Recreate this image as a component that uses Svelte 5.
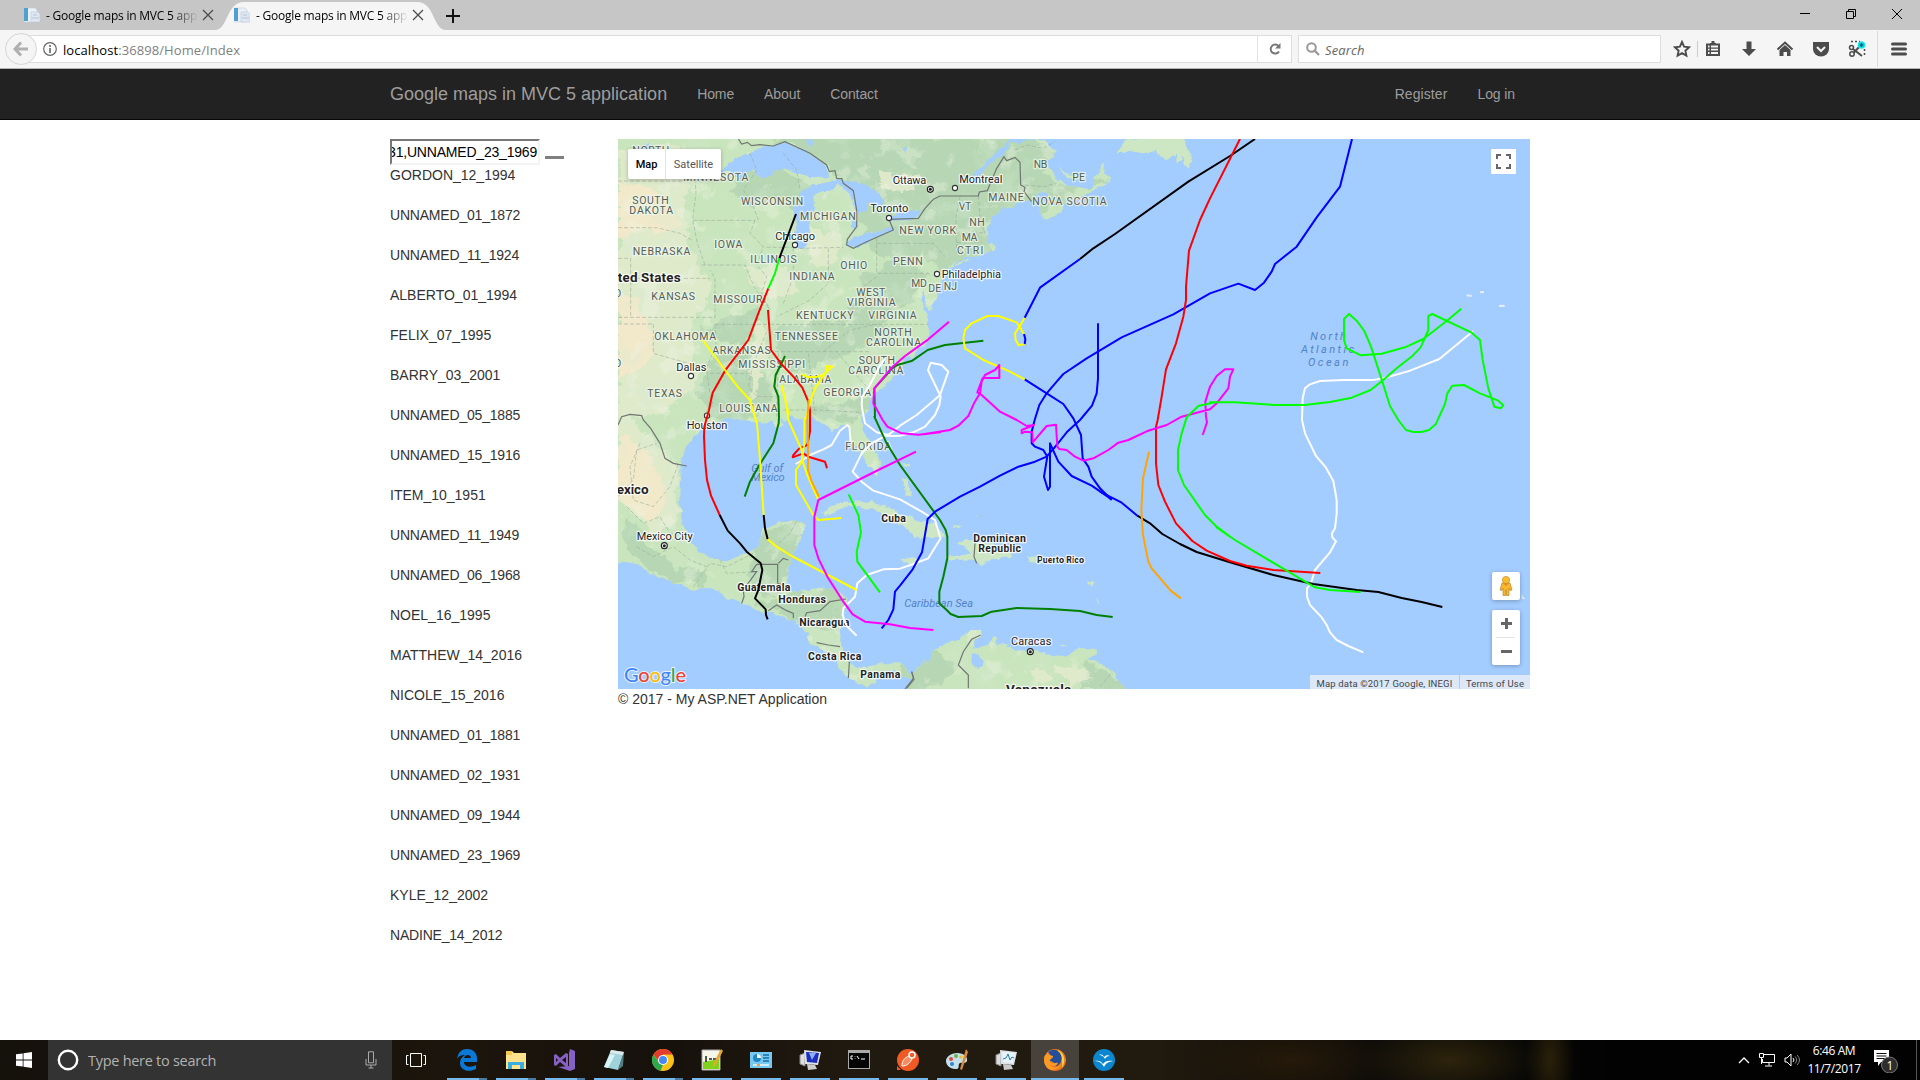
<script>
  // Origins of the map sheets; geometry inside a sheet is in thirds of a pixel.
  const sheets = { A: [610, 130], B: [900, 130], C: [610, 400], D: [900, 400], E: [1210, 130], F: [1210, 400] };
  const at = (s, x, y) => [+(sheets[s][0] + x / 3).toFixed(2), +(sheets[s][1] + y / 3).toFixed(2)];

  // "A 10,20 30,40 B 5,5" -> SVG path data; a letter switches the sheet.
  function path(src, close = false) {
    let s = 'A';
    const pts = [];
    for (const tok of src.trim().split(/\s+/)) {
      if (sheets[tok]) s = tok;
      else pts.push(at(s, ...tok.split(',').map(Number)).join(' '));
    }
    return 'M' + pts.join('L') + (close ? 'Z' : '');
  }

  const mainland = `A 10,15 B 340,15 335,35 355,40 372,30 430,28 470,62 458,82 442,90 448,118 465,140 500,165 520,172 552,178 580,172 585,140 600,118 616,100 612,130 632,145 615,165 580,180 540,200 500,212 488,235 470,255 435,268 418,250 420,222 450,195 430,182 410,200 385,210 350,218 335,235 310,230 290,250 275,260 262,300 268,325 262,340 285,345 286,356 270,360 255,372 215,378 160,398 158,405 210,385 205,395 150,412 134,440 120,470 100,476 112,500 95,530 88,550 75,500 70,480 62,500 80,555 82,580 92,612 75,645 50,655 42,680 18,685 5,710
    A 870,715 845,748 820,772 795,790 778,820 770,850 C 757,40 757,80 778,125 800,160 810,190 808,220 797,232 785,205 765,180 750,150 740,155 735,130 720,125 722,95 712,75 695,75 670,98 650,78 610,55 560,55 545,45 525,65 505,50 522,75 500,88 485,65 440,70 400,58 360,50 330,62 300,72 270,92 230,135 212,190 208,290 215,360 240,420 265,455 300,480 350,480 400,465 430,450 445,440 458,385 500,370 560,360 582,368 578,398 560,440 545,475 530,530 535,575 600,570 650,565 700,580 712,598 700,640 692,690 690,740 715,785 755,803 820,790 870,790 905,820 930,800 940,780 955,788 965,760 990,740 D 120,740 140,730 200,705 212,690 245,690 245,700 225,725 220,750 232,745 262,735 282,710 290,715 285,730 330,738 345,755 400,752 450,765 500,768 535,745 592,745 590,765 560,775 605,790 640,820 680,870 C 880,885 905,840 880,832 850,812 830,812 800,830 795,850 770,860 720,838 690,810 680,780 640,750 600,730 580,690 560,665 530,655 500,645 440,630 400,608 350,595 330,575 290,560 250,572 180,545 120,520 70,490 15,482`;

  const islands = [
    'C 635,340 660,320 700,305 770,303 830,320 880,345 920,360 980,375 D 120,395 130,410 60,415 40,410 30,390 0,375 C 830,345 770,325 720,318 690,325 660,345',
    'D 170,425 200,420 270,430 330,450 340,470 280,478 240,495 225,480 185,478 150,475 215,460 190,435',
    'C 870,478 900,470 935,482 925,492 885,490', 'D 382,472 435,473 450,485 385,488', 'D 145,470 190,474 185,480 150,480',
    'B 650,66 680,27 850,15 865,60 880,85 865,118 845,85 830,105 828,70 800,90 770,62 730,70 700,65',
    'B 478,110 505,135 560,135 555,150 510,148 485,125', 'C 875,235 890,235 897,260 905,290 890,285 885,262', 'C 870,190 895,190 900,200 880,196',
    'D 5,230 18,240 22,262 10,255', 'D 160,378 175,372 188,378 165,382', 'D 218,348 232,350 228,354', 'D 565,545 582,542 575,560', 'D 585,598 600,612 590,610', 'D 480,735 500,735 485,742'
  ];

  const lakes = [
    'A 300,145 345,115 370,90 450,55 522,37 590,65 640,100 655,140 610,145 560,125 520,115 480,135 460,150 430,118 390,150 350,125',
    'A 550,355 558,280 548,235 572,190 610,165 690,150 665,180 630,185 605,205 615,235 598,290 602,330 580,357',
    'A 670,145 740,155 790,175 822,215 800,235 775,220 765,240 748,248 742,300 725,290 735,220 712,185',
    'A 706,345 735,318 800,305 858,288 850,305 790,325 742,352', 'A 828,270 870,245 935,238 925,262 870,270 840,274',
    'B 225,125 300,60 345,15 355,15 310,70 250,120 215,165', 'D 215,765 235,760 252,785 235,810 218,790', 'A 90,45 120,42 130,60 100,65',
    'A 590,25 605,25 615,42 600,45', 'A 880,55 895,50 890,70', 'C 560,680 600,700 590,708 565,695'
  ];

  const dark = [
    'A 440,20 B 340,15 470,60 440,130 500,165 630,140 420,265 300,240 262,300 270,360 160,400 120,440 100,400 60,370 20,400 A 800,380 770,320 730,200 640,110 520,35',
    'A 720,560 760,440 840,400 960,420 930,490 860,540 800,620 700,690 620,700 650,620',
    'A 390,130 470,100 560,140 620,170 580,260 510,210 420,230 360,180', 'A 350,560 450,540 430,620 330,640 270,600', 'A 500,600 700,560 690,640 590,730 500,710',
    'A 600,830 780,800 770,850 700,880 600,855', 'C 445,440 460,385 560,362 578,400 530,520 510,580 440,590 420,520', 'C 500,590 640,565 705,590 690,690 630,690 540,650 440,620',
    'C 60,350 110,430 180,490 290,520 280,555 180,540 60,480 30,400', 'A 260,780 330,650 430,680 490,780 450,860 300,870', 'D 0,770 100,740 160,790 130,870 0,870', 'D 560,790 640,820 680,870 540,870'
  ];
  const pale = [
    'A 24,60 200,50 240,150 220,260 250,380 300,470 240,600 260,760 160,850 24,860', 'C 24,40 90,60 130,120 200,200 200,360 130,410 60,330 24,300',
    'A 400,410 530,410 560,480 500,510 450,490 410,450', 'A 800,130 940,140 900,170 810,180', 'A 600,290 700,310 680,400 590,410', 'D 470,800 540,800 580,840 510,850 480,825', 'A 440,570 480,600 450,740 420,830 425,690', 'D 380,820 420,805 460,845 400,842'
  ];
  const sand = ['A 24,160 100,170 180,230 210,290 150,310 80,300 24,320', 'A 24,480 80,510 130,600 120,700 24,740', 'C 24,110 110,140 150,230 170,300 120,370 60,320 24,300'];

  const borders = [
    'A 385,27 395,42 412,37 425,47 450,44 490,48 525,35 600,70 650,105 658,125 675,122 680,145 695,146 700,160 730,182 740,240 740,290 712,328 710,345 730,355 770,335 850,300 837,268 925,265 945,235 B 100,208 120,198 235,198 238,186 262,182 290,115 312,80 320,92 345,82 360,97 362,165 375,172 372,185 395,215',
    'C 24,75 35,50 60,43 95,47 100,60 122,85 150,130 165,175 190,190 230,198', 'C 395,610 402,590 400,570 440,515 425,515 440,493 503,493 503,550 530,560', 'C 505,490 520,475 535,480',
    'C 475,632 500,615 530,632 550,640 550,655', 'C 585,650 590,638 630,632 660,605 708,597', 'C 620,728 655,735 690,740', 'C 718,785 715,835', 'C 905,815 912,838 890,865',
    'D 242,705 215,718 190,755 175,795 205,825 205,865', 'D 225,430 222,470 230,490', 'D 35,815 40,835 15,867'
  ];
  const states = [
    'A 24,153 250,153', 'A 24,293 140,293 210,310 245,330', 'A 250,75 258,190 248,270 262,340 285,405', 'A 250,271 435,271', 'A 275,405 405,405 432,470 480,540', 'A 24,385 62,385 62,562', 'A 24,445 300,445', 'A 24,562 315,562 315,445 300,420', 'A 130,582 130,670 200,690 290,715',
    'A 315,583 480,583', 'A 480,583 730,583 B 85,583', 'A 315,583 318,640 290,715 298,780 310,830', 'A 300,730 420,730', 'A 470,605 430,700 415,770 440,800 505,800', 'A 495,665 780,665', 'A 505,670 500,860', 'A 595,670 615,850', 'A 520,840 620,840 770,848',
    'A 435,271 420,310 460,350 440,405 470,440 455,490 480,540', 'A 470,352 550,352', 'A 550,352 550,440 520,520', 'A 570,355 700,352', 'A 655,355 655,460 600,510 500,560', 'A 800,325 800,430 B -70,430 90,430', 'A 800,440 760,470 740,540 700,583', 'A 640,665 720,600 800,583', 'A 680,665 760,760 790,790', 'A 800,340 B 100,340 135,380',
    'A 420,70 440,120 400,180 430,230 445,270', 'A 520,70 560,120 570,180', 'B 180,200 168,260 170,370', 'B 235,198 240,260 255,310', 'B 165,310 255,308', 'B 170,337 245,337', 'B 345,60 380,45 430,55 465,35', 'A 24,582 130,582', 'B 375,165 430,170 470,160',
    'C 24,290 70,240 80,150 140,130', 'C 90,130 60,200 70,300 130,320 180,260 205,190', 'C 50,320 100,370 150,350 180,400 230,410', 'C 80,440 130,470 190,440 240,480 290,500', 'C 250,560 300,490 350,500 430,460', 'C 505,430 540,400 560,362', 'C 330,480 350,520 440,515', 'D 600,860 630,825'
  ];

  const tracks = [
    ['#fffaf0', 'C 557,192 578,180 600,165 640,148 665,135 690,92 712,75 718,80 722,125'],
    ['#ffffff', 'A 825,685 805,715 780,765 757,800 755,820 C 757,30 765,70 800,97 835,105 870,77 920,45 973,0 B 120,795 145,725 125,705 92,698 84,720 120,795 D 122,-10 118,15 105,45 75,80 40,97 0,107 C 825,108 785,130 755,160 728,215 755,245 790,272 870,298 935,335 975,360 990,410 D 122,415 85,475 40,492 0,506 C 820,508 770,525 742,550 735,590 700,625 698,645 710,678 740,707'],
    ['#ffffff', 'E 790,603 688,687 600,722 520,745 490,750 400,750 330,753 300,763 285,775 278,805 276,870 F 276,60 285,100 318,168 348,203 370,243 380,300 380,340 375,385 366,400 367,412 378,424 360,457 315,510 303,550 291,565 291,590 300,615 335,652 350,675 360,697 380,720 415,738 460,757'],
    ['#008000', 'A 525,678 515,700 497,735 493,770 505,800 507,860 C 506,70 490,130 445,200 420,245 404,290'],
    ['#ff0000', 'A 475,475 445,550 415,630 345,722 308,788 302,815 297,840 C 283,80 282,110 285,180 291,240 303,287 329,345'],
    ['#000000', 'A 558,252 508,385'], ['#00ff00', 'A 508,385 495,430 475,475'],
    ['#000000', 'C 329,345 353,392 390,430 410,455 452,490 457,510 445,570 435,595 467,628 468,645 473,658'],
    ['#ff0000', 'A 474,540 483,660 515,703 550,740 577,773 595,815 600,840 C 600,95 592,135 568,145 550,165 548,172 580,160 595,170 645,185 651,205'],
    ['#ffff00', 'A 278,630 345,720 385,772 420,810 430,845 C 441,70 450,180 461,345'],
    ['#000000', 'C 461,345 465,385 473,418'], ['#ffff00', 'C 473,418 500,440 545,468 740,570'],
    ['#ffff00', 'A 515,765 535,850 C 530,20 535,60 555,105 575,150 578,185 592,225 627,305'],
    ['#ffff00', 'A 575,733 590,740 615,742 640,735 655,720 667,710 650,708 648,725 615,775 600,815 590,860 C 583,60 583,130 575,185 558,210 558,255 610,345 625,360 694,354'],
    ['#ffa500', 'A 596,810 592,870 C 594,130 594,210 605,245 627,290'],
    ['#008000', 'B 250,632 135,645 83,660 37,692 0,703 A 860,706 846,715 825,740 793,775 795,860 C 793,50 830,130 870,195 990,360 D 137,390 142,410 142,475 130,530 118,575 118,610 140,630 152,642 175,651 245,648 275,635 350,624 450,627 540,633 590,645 638,651'],
    ['#0000ff', 'E 426,27 390,170 320,262 260,350 195,402 185,425 162,458 135,480 85,461 0,490 B 820,553 665,622 560,685 490,732 470,755 440,790 418,825 404,870 D 395,95 395,130 405,140 430,150 442,170 432,230 444,270 450,260 450,130 475,185 515,228 575,257 635,298'],
    ['#0000ff', 'B 594,580 594,745 590,790 576,827 540,870 D 500,97 470,135 440,170 405,185 355,200 300,227 240,260 180,290 105,335 83,357 66,457 38,508 0,557 C 855,575 850,628 835,660 815,685'],
    ['#0000ff', 'B 374,748 440,790 490,822 520,865 D 543,105 548,175 565,200 575,230 600,265 635,300'],
    ['#0000ff', 'D 600,275 665,308 712,347'], ['#000000', 'D 712,347 750,370 787,402 840,432 890,456 990,487 F 60,487 190,525 310,552 440,570 505,576 575,594 635,606 697,621'],
    ['#ffff00', 'B 374,563 358,590 345,610 347,630 356,646 374,642'], ['#ffff00', 'B 374,615 350,577 295,558 262,558 215,580 195,600 190,625 195,655 250,690 330,725 374,748'],
    ['#0000ff', 'B 372,612 376,628 374,642'], ['#0000ff', 'B 374,563 420,473 540,387'], ['#000000', 'B 540,387 580,355 645,312 865,155 990,78 E 135,27'],
    ['#ff0000', 'E 90,27 0,205 B 900,270 867,362 858,470 858,510 850,560 828,640 798,718 785,800 773,870 D 768,80 768,190 775,255 795,305 828,370 877,423 920,452 990,483 F 110,497 190,510 331,519'],
    ['#ffa500', 'D 747,155 729,235 724,330 729,405 745,485 755,505 812,572 843,595'],
    ['#ff00ff', 'B 147,575 85,628 15,678 A 848,710 793,775 790,820 818,870 C 832,80 875,100 925,104 990,97 D 70,103 150,90 175,77 205,48 222,10 B 240,790 245,755 255,735 285,720 298,705 298,744 248,744 232,787 245,795 300,845 350,870 D 380,78 402,75 365,90 365,100 375,95 397,97 398,127 440,78 468,74 472,140 478,147 500,150 525,170 550,182 580,175 625,150 655,128 685,120 745,92 800,75 845,50 930,28 950,10 B 985,775 990,740 E 70,718 45,718 20,738 0,770 B 916,815 918,860 D 921,67 908,105'],
    ['#ff00ff', 'C 918,155 805,210 625,300 613,350 613,435 625,475 652,530 700,605 728,643 765,665 840,673 900,684 970,690'],
    ['#00ff00', 'C 716,283 745,345 753,397 740,455 742,485 810,577'],
    ['#00ff00', 'E 754,536 710,573 640,627 585,652 515,671 453,676 410,655 402,630 402,567 417,552 440,572 463,603 483,650 517,755 540,828 565,870 F 588,90 610,96 635,96 657,90 677,73 705,12 E 712,790 727,767 762,765 810,790 865,812 880,826 872,835 853,830 835,775 818,690 810,630 785,608 667,552 655,558 655,600 632,652 608,677 560,715 517,752 482,780 425,803 360,816 285,825 195,825 75,817 0,817 B 945,817 895,828 860,862 D 845,100 834,150 834,210 852,255 915,345 950,380 990,410 F 20,382 75,420 235,515 315,562 360,570 452,576']
  ];

  // sheet, left, right, baseline, text, style
  const labels = [
    ['A', 67, 178, 70, 'NORTH', 'st'], ['A', 67, 176, 221, 'SOUTH', 'st'], ['A', 58, 189, 250, 'DAKOTA', 'st'], ['A', 220, 415, 151, 'MINNESOTA', 'st'], ['A', 393, 580, 223, 'WISCONSIN', 'st'],
    ['A', 570, 737, 269, 'MICHIGAN', 'st'], ['A', 313, 397, 353, 'IOWA', 'st'], ['A', 68, 241, 374, 'NEBRASKA', 'st'], ['A', 421, 560, 397, 'ILLINOIS', 'st'], ['A', 691, 772, 415, 'OHIO', 'st'],
    ['A', 538, 674, 448, 'INDIANA', 'st'], ['A', 849, 938, 403, 'PENN', 'st'], ['A', 904, 951, 470, 'MD', 'st'], ['A', 124, 255, 508, 'KANSAS', 'st'], ['A', 310, 468, 517, 'MISSOURI', 'st'],
    ['A', 739, 826, 496, 'WEST', 'st'], ['A', 711, 857, 526, 'VIRGINIA', 'st'], ['A', 558, 731, 566, 'KENTUCKY', 'st'], ['A', 775, 920, 566, 'VIRGINIA', 'st'], ['A', 133, 318, 628, 'OKLAHOMA', 'st'],
    ['A', 494, 684, 628, 'TENNESSEE', 'st'], ['A', 793, 905, 616, 'NORTH', 'st'], ['A', 768, 933, 646, 'CAROLINA', 'st'], ['A', 307, 482, 670, 'ARKANSAS', 'st'], ['A', 385, 585, 712, 'MISSISSIPPI', 'st'],
    ['A', 746, 855, 701, 'SOUTH', 'st'], ['A', 715, 880, 731, 'CAROLINA', 'st'], ['A', 508, 664, 757, 'ALABAMA', 'st'], ['A', 640, 783, 797, 'GEORGIA', 'st'], ['A', 112, 216, 799, 'TEXAS', 'st'],
    ['A', 328, 503, 844, 'LOUISIANA', 'st'], ['A', -15, 34, 500, 'CO', 'st'], ['A', -15, 34, 710, 'CO', 'st'], ['B', -2, 168, 310, 'NEW YORK', 'st'], ['B', 401, 442, 114, 'NB', 'st'], ['B', 517, 555, 152, 'PE', 'st'],
    ['B', 176, 214, 239, 'VT', 'st'], ['B', 265, 371, 211, 'MAINE', 'st'], ['B', 397, 620, 223, 'NOVA SCOTIA', 'st'], ['B', 208, 254, 286, 'NH', 'st'], ['B', 185, 232, 332, 'MA', 'st'],
    ['B', 171, 250, 370, 'CTRI', 'st'], ['B', 85, 124, 486, 'DE', 'st'], ['B', 131, 171, 478, 'NJ', 'st'], ['C', 706, 843, 150, 'FLORIDA', 'st'],
    ['A', 848, 949, 160, 'Ottawa', 'city'], ['A', 781, 895, 244, 'Toronto', 'city'], ['A', 496, 615, 328, 'Chicago', 'city'], ['A', 199, 289, 722, 'Dallas', 'city'], ['C', 230, 352, 87, 'Houston', 'city'],
    ['B', 178, 307, 158, 'Montreal', 'city'], ['B', 125, 303, 442, 'Philadelphia', 'city'], ['C', 80, 248, 418, 'Mexico City', 'city'], ['D', 333, 454, 733, 'Caracas', 'city'],
    ['A', -38, 212, 456, 'United States', 'big'], ['C', -15, 116, 281, 'Mexico', 'big'], ['D', 318, 514, 881, 'Venezuela', 'big'],
    ['C', 814, 888, 366, 'Cuba', 'land'], ['C', 382, 541, 573, 'Guatemala', 'land'], ['C', 505, 648, 609, 'Honduras', 'land'], ['C', 568, 718, 678, 'Nicaragua', 'land'], ['C', 594, 754, 780, 'Costa Rica', 'land'],
    ['C', 751, 871, 832, 'Panama', 'land'], ['D', 220, 378, 426, 'Dominican', 'land'], ['D', 235, 363, 456, 'Republic', 'land'], ['D', 411, 552, 489, 'Puerto Rico', 'small'],
    ['C', 424, 520, 214, 'Gulf of', 'sea'], ['C', 424, 524, 243, 'Mexico', 'sea'], ['D', 13, 219, 620, 'Caribbean Sea', 'sea'], ['E', 301, 408, 629, 'North', 'ocean'], ['E', 273, 432, 668, 'Atlantic', 'ocean'], ['E', 294, 415, 707, 'Ocean', 'ocean']
  ].map(([s, x0, x1, y, text, kind]) => ({ p: at(s, x0, y + 1), w: (x1 - x0) / 3, text, kind }));

  const towns = [['A', 837, 264], ['A', 555, 345], ['A', 243, 738], ['C', 291, 47], ['B', 165, 174], ['B', 111, 432]].map((t) => at(...t));
  const capitals = [['A', 961, 178], ['C', 163, 437], ['D', 391, 755]].map((t) => at(...t));

  const storms = ['GORDON_12_1994', 'UNNAMED_01_1872', 'UNNAMED_11_1924', 'ALBERTO_01_1994', 'FELIX_07_1995', 'BARRY_03_2001', 'UNNAMED_05_1885', 'UNNAMED_15_1916', 'ITEM_10_1951', 'UNNAMED_11_1949', 'UNNAMED_06_1968', 'NOEL_16_1995', 'MATTHEW_14_2016', 'NICOLE_15_2016', 'UNNAMED_01_1881', 'UNNAMED_02_1931', 'UNNAMED_09_1944', 'UNNAMED_23_1969', 'KYLE_12_2002', 'NADINE_14_2012'];
  const apps = ['edge', 'files', 'vs', 'notepad', 'chrome', 'npp', 'panel', 'remote', 'cmd', 'postman', 'paint', 'perf', 'firefox', 'bird'];
  const stacked = ['edge', 'files', 'vs', 'notepad', 'chrome'];
</script>

{#snippet favicon()}
  <svg class="fav" width="16" height="16" viewBox="0 0 16 16"><path d="M0 1h11l2 2v12H0z" fill="#e9f0f6" stroke="#c3d0dc" stroke-width=".6" /><path d="M0 1h4v13H0z" fill="#4f9fd0" /><path d="M7 5h7l2 2v8H7z" fill="#dfe7f1" stroke="#bccbdd" stroke-width=".6" /><path d="M9 8h4M8 11h7" stroke="#b4c5dd" /></svg>
{/snippet}
{#snippet cross()}
  <svg class="cross" width="12" height="12" viewBox="0 0 12 12"><path d="M1 1l10 10M11 1L1 11" stroke="#4c4c4c" stroke-width="1.3" /></svg>
{/snippet}

<div class="screen">
  <header class="tabs">
    <div class="tab first">{@render favicon()}<span>- Google maps in MVC 5 app</span>{@render cross()}</div>
    <div class="tab active">
      <svg class="shape" width="240" height="30" viewBox="0 0 240 30"><path d="M0 30C13 30 11 3 28 2H203C220 3 218 30 231 30z" fill="#f5f5f5" /></svg>
      {@render favicon()}<span>- Google maps in MVC 5 app</span>{@render cross()}
    </div>
    <svg class="plus" width="14" height="14" viewBox="0 0 14 14"><path d="M7 0v14M0 7h14" stroke="#111" stroke-width="2" /></svg>
    <div class="window">
      <svg width="10" height="10"><path d="M0 4.5h10" stroke="#000" /></svg>
      <svg width="10" height="10"><path d="M.5 2.5h7v7h-7zM2.500 2.500v-2h7v7h-2" fill="none" stroke="#000" /></svg>
      <svg width="10" height="10"><path d="M0 0l10 10M10 0L0 10" stroke="#000" /></svg>
    </div>
  </header>

  <div class="toolbar">
    <div class="back"><svg width="16" height="16" viewBox="0 0 16 16"><path d="M8 1.500L2 8l6 6.500M2.500 8H15" fill="none" stroke="#b0b0b0" stroke-width="3" /></svg></div>
    <div class="url">
      <svg width="14" height="14" viewBox="0 0 14 14"><circle cx="7" cy="7" r="6.300" fill="none" stroke="#666" stroke-width="1.200" /><path d="M7 6v5M7 3v2" stroke="#666" stroke-width="1.600" /></svg>
      <p>localhost<span>:36898/Home/Index</span></p>
      <div class="reload"><svg width="12" height="12" viewBox="0 0 12 12"><path d="M9.500 3A4.500 4.500 0 1 0 10 8.500" fill="none" stroke="#777" stroke-width="2" /><path d="M11.500 0v5.500H6z" fill="#777" /></svg></div>
    </div>
    <div class="find">
      <svg width="14" height="14" viewBox="0 0 14 14"><circle cx="5.500" cy="5.500" r="4.300" fill="none" stroke="#999" stroke-width="2" /><path d="M8.500 8.500L13 13" stroke="#999" stroke-width="2.300" /></svg>
      <em>Search</em>
    </div>
    <div class="tools">
      <svg width="18" height="18" viewBox="0 0 18 18"><path d="M9 2l2.100 4.700 5 .6-3.700 3.400 1 5L9 13.200l-4.400 2.500 1-5L1.900 7.300l5-.6z" fill="none" stroke="#4c4c4c" stroke-width="1.900" /></svg>
      <i></i>
      <svg width="18" height="18" viewBox="0 0 18 18"><path d="M6 3h1.500V1h3v2H12v2H6zM2 3.500h14V16H2z" fill="#4c4c4c" /><path d="M4 6.500h1.500M7 6.500h7M4 9.700h1.500M7 9.700h7M4 13h1.500M7 13h7" stroke="#f5f5f5" stroke-width="1.800" /></svg>
      <svg width="18" height="18" viewBox="0 0 18 18"><path d="M6.500 1.500h5V9H16l-7 7L2 9h4.500z" fill="#4c4c4c" /></svg>
      <svg width="18" height="18" viewBox="0 0 18 18"><path d="M1.500 9.500L9 2.500l7.500 7" fill="none" stroke="#4c4c4c" stroke-width="2" /><path d="M3.500 10L9 5l5.500 5v6H11v-4H7.500v4h-4z" fill="#4c4c4c" /></svg>
      <svg width="18" height="18" viewBox="0 0 18 18"><path d="M1 2h16v7a8 7.500 0 0 1-16 0z" fill="#4c4c4c" /><path d="M5 7l4 4 4-4" fill="none" stroke="#f5f5f5" stroke-width="2" /></svg>
      <svg width="18" height="18" viewBox="0 0 18 18"><path d="M3 1.500h9M16.500 9v7" stroke="#4c4c4c" stroke-width="1.500" stroke-dasharray="2 2" /><circle cx="3.500" cy="7.500" r="2" fill="none" stroke="#4c4c4c" stroke-width="1.500" /><circle cx="4" cy="14" r="2.200" fill="none" stroke="#4c4c4c" stroke-width="1.500" /><path d="M5 9l9 7M5.500 13L12 6" stroke="#4c4c4c" stroke-width="1.900" /><circle cx="13.500" cy="5" r="3.800" fill="#12e8f5" /><path d="M13.500 2.800v4.400M11.500 5h4M12 3.500l3 3M15 3.500l-3 3" stroke="#075a66" /></svg>
      <b></b>
      <svg class="menu" width="18" height="18" viewBox="0 0 18 18"><path d="M2.500 4h13M2.500 9h13M2.500 14h13" stroke="#4c4c4c" stroke-width="3" stroke-linecap="round" /></svg>
    </div>
  </div>

  <nav>
    <div class="container">
      <a class="brand">Google maps in MVC 5 application</a><a>Home</a><a>About</a><a>Contact</a><a class="right">Register</a><a>Log in</a>
    </div>
  </nav>

  <main class="container">
    <aside>
      <div class="pick"><div class="field"><span>31,UNNAMED_23_1969</span></div><hr /></div>
      {#each storms as storm}<p class:tight={storm.startsWith('UNNAMED') || storm.startsWith('NADINE')}>{storm}</p>{/each}
    </aside>
    <section>
      <div class="map">
        <svg class="chart" width="912" height="550" viewBox="618 139 912 550">
          <defs>
            <clipPath id="coast"><path d={path(mainland, true)} /></clipPath>
            <filter id="relief" x="0" y="0" width="100%" height="100%"><feTurbulence type="fractalNoise" baseFrequency=".035" numOctaves="4" seed="8" /><feColorMatrix values="0 0 0 0 .67  0 0 0 0 .82  0 0 0 0 .66  3 0 0 0 -1.500" /><feComponentTransfer><feFuncA type="discrete" tableValues="0 .1 .22 .3" /></feComponentTransfer></filter>
            <filter id="plains" x="0" y="0" width="100%" height="100%"><feTurbulence type="fractalNoise" baseFrequency=".05" numOctaves="3" seed="21" /><feColorMatrix values="0 0 0 0 .91  0 0 0 0 .93  0 0 0 0 .8  0 5 0 0 -2.800" /><feComponentTransfer><feFuncA type="discrete" tableValues="0 .35 .6" /></feComponentTransfer></filter>
            <filter id="rough" x="-5%" y="-5%" width="110%" height="110%"><feTurbulence type="fractalNoise" baseFrequency=".06" numOctaves="3" seed="3" /><feDisplacementMap in="SourceGraphic" scale="16" xChannelSelector="R" yChannelSelector="G" /></filter>
            <filter id="shore" x="-5%" y="-5%" width="110%" height="110%"><feTurbulence type="fractalNoise" baseFrequency=".13" numOctaves="3" seed="5" /><feDisplacementMap in="SourceGraphic" scale="6" xChannelSelector="R" yChannelSelector="G" /></filter>
          </defs>
          <rect x="618" y="139" width="912" height="550" fill="#a3ccff" />
          <g filter="url(#shore)">
            <path d={path(mainland, true)} fill="#c9e5bd" />
            {#each islands as d}<path d={path(d, true)} fill="#cde6c3" />{/each}
            <g clip-path="url(#coast)">
              <g filter="url(#rough)">
                {#each dark as d}<path d={path(d, true)} fill="#b7d7b4" />{/each}
                {#each pale as d}<path d={path(d, true)} fill="#e0eacb" opacity=".95" />{/each}
                {#each sand as d}<path d={path(d, true)} fill="#f2e9ca" opacity=".95" />{/each}
              </g>
              <rect x="618" y="139" width="620" height="550" filter="url(#relief)" />
              <rect x="618" y="139" width="620" height="550" filter="url(#plains)" opacity=".55" />
            </g>
            {#each lakes as d}<path d={path(d, true)} fill="#a3ccff" />{/each}
          </g>
          <path d={path('E 770,496 785,498')} stroke="#e5eff5" stroke-width="2" /><path d={path('E 810,487 822,486')} stroke="#e5eff5" stroke-width="2" /><path d={path('E 867,528 884,527')} stroke="#e5eff5" stroke-width="2" /><path d={path('F 934,583 945,597 937,597', true)} fill="#e5eff5" />
          {#each states as d}<path class="state" d={path(d)} />{/each}
          {#each borders as d}<path class="border" d={path(d)} />{/each}
          {#each towns as [x, y]}<circle cx={x} cy={y} r="2.600" fill="#fff" stroke="#333" stroke-width="1.100" />{/each}
          {#each capitals as [x, y]}<circle cx={x} cy={y} r="3" fill="#fff" stroke="#222" stroke-width="1.100" /><circle cx={x} cy={y} r="1.500" fill="#222" />{/each}
          {#each labels as l}<text class={l.kind} x={l.p[0]} y={l.p[1]} textLength={l.w}>{l.text}</text>{/each}
          {#each tracks as [color, d]}<path class="track" d={path(d)} stroke={color} />{/each}
          <text class="logo" x="624" y="681.500" textLength="62"><tspan fill="#4285f4">G</tspan><tspan fill="#ea4335">o</tspan><tspan fill="#fbbc05">o</tspan><tspan fill="#4285f4">g</tspan><tspan fill="#34a853">l</tspan><tspan fill="#ea4335">e</tspan></text>
        </svg>
        <div class="kinds"><b>Map</b><span>Satellite</span></div>
        <div class="full"><svg width="15" height="15" viewBox="0 0 15 15"><path d="M1 5V1h4M10 1h4v4M14 10v4h-4M5 14H1v-4" fill="none" stroke="#666" stroke-width="2" /></svg></div>
        <div class="controls">
          <div class="peg"><svg width="14" height="20" viewBox="0 0 14 20"><path d="M3 7h8l2 7-2 .5L10 12v7.500H7.500V14h-1v5.500H4V12l-1 2.500L1 14z" fill="#f9b82c" stroke="#b8862a" stroke-width=".7" /><circle cx="7" cy="4" r="3.600" fill="#fbbd30" stroke="#c18d29" stroke-width=".7" /><path d="M4.500 7.500h5L7 10z" fill="#dd852a" /></svg></div>
          <div class="zoom"><svg width="28" height="55" viewBox="0 0 28 55"><path d="M14.500 8v11M9 13.500h11M9 41.500h11" stroke="#666" stroke-width="3" /><path d="M4 27.500h19" stroke="#e3e3e3" /></svg></div>
        </div>
        <div class="legal"><span>Map data ©2017 Google, INEGI</span><span>Terms of Use</span></div>
      </div>
      <footer>© 2017 - My ASP.NET Application</footer>
    </section>
  </main>

  <div class="taskbar">
    <div class="start"><svg width="16" height="16" viewBox="0 0 16 16"><path d="M0 2.300L6.700 1.400v6.200H0zM7.500 1.300L16 0v7.600H7.500zM0 8.400h6.700v6.200L0 13.700zM7.500 8.400H16V16l-8.500-1.200z" fill="#fff" /></svg></div>
    <div class="cortana">
      <svg width="22" height="22" viewBox="0 0 22 22"><circle cx="11" cy="11" r="9.200" fill="none" stroke="#fff" stroke-width="2.400" /></svg>
      <span>Type here to search</span>
      <svg width="12" height="18" viewBox="0 0 12 18"><path d="M3.500.8h5v11h-5zM1 8v6h10V8M6 14v3M3.500 17h5" fill="none" stroke="#aaa" /></svg>
    </div>
    <div class="view"><svg width="20" height="14" viewBox="0 0 20 14"><path d="M4.500.5h11v13h-11zM2.500 2.500h-2v9h2M17.500 2.500h2v9h-2" fill="none" stroke="#fff" /></svg></div>
    <div class="apps">
      {#each apps as app}
        <div class="app" class:on={app === 'firefox'} class:many={stacked.includes(app)}>
          <svg width="22" height="22" viewBox="0 0 22 22">
            {#if app === 'edge'}
              <path d="M1 10C2 3 6 0 11 0c7 0 10 5 10 9v4H8c0 5 7 6 12 3v4c-8 4-16 1-16-6 0-4 2-6 5-8-5 0-7 2-8 4zm7-1h7c0-4-6-4-7 0z" fill="#0a78d7" />
            {:else if app === 'files'}
              <path d="M1 2h6l2 2h12v16H1z" fill="#ffe28c" /><path d="M1 2h6v4H1z" fill="#f4c950" /><path d="M3 20v-7h16v7h-4v-4H7v4z" fill="#3aaee0" />
            {:else if app === 'vs'}
              <path d="M16 0l5 2v18l-5 2-12-4 11-1V4zM0 6l2-1 4 4 6-5 2 1v12l-2 1-6-5-4 4-2-1zm2 3v4l2-2zm6 2l4 3V8z" fill="#8661c5" />
            {:else if app === 'notepad'}
              <path d="M8 1l13 2-6 18L1 18z" fill="#9fd3dc" /><path d="M8 1l13 2-1 3L7 4z" fill="#dce9ec" /><path d="M7 5l5 1-7 13-4-1z" fill="#d9f2f5" /><path d="M21 3l-6 18 5-4z" fill="#557d86" />
            {:else if app === 'chrome'}
              <circle cx="11" cy="11" r="11" fill="#fbc116" /><path d="M1.500 5.500A11 11 0 0 1 20.500 5.500H11L7 13z" fill="#e33b2e" /><path d="M1.500 5.500L7 14l4 2-2.500 5.800A11 11 0 0 1 1.500 5.500z" fill="#2da94f" /><circle cx="11" cy="11" r="5" fill="#fff" /><circle cx="11" cy="11" r="4" fill="#4688f4" />
            {:else if app === 'npp'}
              <path d="M1 1h18v20H1z" fill="#f5f5e8" stroke="#aaa" /><path d="M2 13l16-3v10H2z" fill="#80d21b" /><path d="M5 7v6M8 10h3M12 10h3" stroke="#222" stroke-width="1.500" /><path d="M20 0l2 2-8 15-2 1v-3z" fill="#e2a932" />
            {:else if app === 'panel'}
              <rect y="3" width="22" height="16" fill="#78c9ef" /><circle cx="7" cy="9" r="4" fill="#1f86c8" /><path d="M7 9V5a4 4 0 0 1 4 4z" fill="#fff" /><path d="M13 6h6M13 9h6M13 12h6" stroke="#176ca6" stroke-width="1.500" /><path d="M3 16h16" stroke="#e9f8ff" stroke-width="1.500" /><path d="M7 16h3" stroke="#f4a22c" stroke-width="2" />
            {:else if app === 'remote' || app === 'perf'}
              <path d="M1 6l5-2v13l-5-2z" fill="#ddd" stroke="#888" /><path d="M5 1l17 2-3 13-13-1z" fill="#dde3e8" /><path d="M7 3l13 1-2 10-10-1z" fill={app === 'remote' ? '#1d2ebd' : '#e9f4fa'} /><path d="M8 15l8 1 2 4-9 1z" fill="#ccc" />
              {#if app === 'remote'}<path d="M10 4l3 7 4-7" fill="#8db0ff" />{:else}<path d="M8 10l3-1 2-4 2 6 2-3 2 1" fill="none" stroke="#247fb5" />{/if}
            {:else if app === 'cmd'}
              <rect y="1" width="22" height="19" fill="#aaa" /><rect x="1" y="4" width="20" height="15" fill="#050505" /><path d="M5 7H3v3h2M7 7v.5M7 9.500v.5M9 7l2 3M13 10h4" fill="none" stroke="#fff" />
            {:else if app === 'postman'}
              <circle cx="11" cy="11" r="11" fill="#f15a24" /><path d="M5 17c0-5 2-8 7-10l3 3c-2 4-5 7-10 7z" fill="#f78b62" stroke="#fff" /><path d="M0 17l4 4H0z" fill="#f15a24" /><circle cx="15" cy="6" r="3" fill="#f15a24" stroke="#fff" stroke-width="1.500" />
            {:else if app === 'paint'}
              <path d="M11 4c7 0 11 4 10 8-2 4-6 0-8 3-1 3 1 5-4 5-5 0-9-4-9-8s5-8 11-8z" fill="#c4e0ee" /><circle cx="5" cy="10" r="2" fill="#de4b32" /><circle cx="10" cy="7" r="2" fill="#67b445" /><circle cx="6" cy="15" r="2" fill="#3482cc" /><circle cx="15" cy="8" r="1.800" fill="#efc02f" /><path d="M20 0l2 3-6 18-2-1z" fill="#d98b3c" />
            {:else if app === 'firefox'}
              <circle cx="11" cy="11" r="11" fill="#ed7320" /><path d="M14 1c7 3 8 12 4 18 1-7-1-9-4-13z" fill="#ffd13d" /><path d="M4 3c5-4 11-2 13 3 2 4 0 9-4 11-4-1-1-5-8-5 0-2 3-2 3-4z" fill="#244e9a" /><path d="M0 9c1-4 3-3 4-6l1 3 4 1c1 2-4 3-3 5 2 4 6 1 8 2-1 3-5 4-8 2 3 4 9 3 12-2-2 8-18 12-18-5z" fill="#f99a24" />
            {:else}
              <circle cx="11" cy="11" r="11" fill="#0c86ce" /><path d="M6 6c3-1 4 0 5 2 2-2 4-2 6-1-3 0-4 1-5 3-2-3-3-4-6-4zM1 12c5-1 7 0 9 3 2-3 5-4 10-3-5 1-7 2-9 6-2-4-5-6-10-6z" fill="#fff" />
            {/if}
          </svg>
        </div>
      {/each}
    </div>
    <div class="tray">
      <svg width="12" height="8" viewBox="0 0 12 8"><path d="M1 7l5-5 5 5" fill="none" stroke="#fff" stroke-width="1.300" /></svg>
      <svg width="16" height="14" viewBox="0 0 16 14"><path d="M5 1.500h10.500v8H3.500V6M10 9.500v3M6 13h7M.5.5h4v4h-4zM2.500 4v7" fill="none" stroke="#fff" /></svg>
      <svg width="17" height="14" viewBox="0 0 17 14"><path d="M1 5h2l4-4v12L3 9H1z" fill="none" stroke="#fff" /><path d="M9 5q2 2 0 4" fill="none" stroke="#fff" /><path d="M11 3.500q3.500 3.500 0 7M13 2q5 5 0 10" fill="none" stroke="#888" /></svg>
      <div class="clock"><span>6:46 AM</span><span>11/7/2017</span></div>
      <svg class="note" width="26" height="26" viewBox="0 0 26 26"><path d="M1 3h15v12H8l-3 4v-4H1z" fill="#fff" /><path d="M3.500 6.500h10M3.500 9h10M3.500 11.500h10" stroke="#111" /><circle cx="16.500" cy="18" r="8" fill="#2d2d2d" stroke="#777" /><text x="13.500" y="22.500">1</text></svg>
    </div>
  </div>
</div>

<style>
  :global(body) { margin: 0; background: #fff; overflow: hidden; }
  * { box-sizing: border-box; }
  svg { display: block; flex: none; }
  .screen { width: 1920px; height: 1080px; display: flex; flex-direction: column; font-family: 'Liberation Sans', Arial, sans-serif; }
  .tabs { height: 30px; background: #c6c6c6; display: flex; align-items: center; font: 12px 'Open Sans', sans-serif; letter-spacing: -.22px; flex: none; }
  .tab { position: relative; height: 30px; display: flex; align-items: center; white-space: nowrap; }
  .tab.first { width: 215px; padding-left: 24px; }
  .tab.active { width: 231px; padding-left: 19px; }
  .tab span { width: 151px; margin-left: 6px; overflow: hidden; position: relative; color: #000; -webkit-mask-image: linear-gradient(90deg, #000 82%, transparent 101%); mask-image: linear-gradient(90deg, #000 82%, transparent 101%); }
  .tab .cross { margin-left: 5px; position: relative; }
  .fav { position: relative; }
  .shape { position: absolute; left: 0; top: 0; }
  .plus { margin: 2px 0 0; }
  .window { margin-left: auto; margin-right: 18px; display: flex; gap: 36px; margin-top: -2px; }
  .toolbar { height: 39px; flex: none; background: #f5f5f5; border-bottom: 1px solid #b6b6b6; display: flex; align-items: center; font: 13px 'Open Sans', sans-serif; padding: 0 12px 1px 5px; }
  .back { width: 32px; height: 32px; flex: none; border: 1px solid #d5d5d5; border-radius: 50%; display: grid; place-items: center; background: #f5f5f5; z-index: 1; }
  .url { height: 28px; width: 1264px; margin-left: -9px; background: #fff; border: 1px solid #ddd; display: flex; align-items: center; padding-left: 14px; flex: none; }
  .url p { margin: 2px 0 0 6px; flex: 1; letter-spacing: .08px; }
  .url p span { color: #808080; }
  .reload { width: 34px; height: 26px; border-left: 1px solid #e2e2e2; display: grid; place-items: center; }
  .find { width: 363px; height: 28px; margin-left: 6px; background: #fff; border: 1px solid #ddd; display: flex; align-items: center; padding-left: 7px; gap: 5px; color: #666; flex: none; }
  .find em { padding-top: 2px; letter-spacing: .1px; }
  .tools { display: flex; align-items: center; gap: 18px; margin-left: 12px; }
  .tools i { width: 1px; height: 16px; background: #ccc; margin: 0 -12px; }
  .tools b { width: 1px; height: 36px; background: #ddd; margin: 0 -7px; }
  .tools .menu { margin-left: 1px; }
  nav { height: 51px; flex: none; background: #222; border-bottom: 1px solid #080808; }
  .container { width: 1170px; margin: 0 auto; }
  nav .container { display: flex; height: 50px; align-items: center; padding-right: 15px; }
  nav a { font-size: 14px; color: #9d9d9d; padding: 0 15px; white-space: nowrap; letter-spacing: -.1px; }
  nav .brand { font-size: 18px; letter-spacing: 0; }
  nav .right { margin-left: auto; letter-spacing: .08px; }
  main { flex: 1; min-height: 0; display: flex; padding: 19px 0 0 15px; font-size: 14px; line-height: 20px; color: #333; }
  aside { width: 228px; }
  .pick { display: flex; height: 26px; }
  .field { width: 150px; height: 26px; border: 2px solid; border-color: #777 #f3f3f3 #f3f3f3 #777; padding: 1px 1px 0; overflow: hidden; display: flex; justify-content: flex-end; color: #000; white-space: nowrap; letter-spacing: -.2px; }
  .pick hr { width: 19px; height: 3px; border: 0; margin: 17px auto 0 5px; background: #808080; }
  aside p { margin: 0 0 20px; }
  aside .tight { letter-spacing: -.2px; }
  .map { position: relative; width: 912px; height: 550px; overflow: hidden; font-family: Roboto, sans-serif; }
  .chart { width: 912px; height: 550px; }
  .state { fill: none; stroke: #93a596; stroke-width: .8; stroke-dasharray: 4 2; opacity: .65; }
  .border { fill: none; stroke: #6f7772; stroke-width: 1.2; }
  .track { fill: none; stroke-width: 2; stroke-linejoin: round; }
  text { font-family: Roboto, sans-serif; paint-order: stroke; stroke: #ffffffc8; stroke-width: 2.500px; stroke-linejoin: round; fill: #222; }
  .st { font-size: 10.500px; fill: #555d57; stroke: #eef6e9cc; }
  .city { font-size: 11px; }
  .big { font-size: 13.500px; font-weight: 700; }
  .land { font-size: 10.500px; font-weight: 700; }
  .small { font-size: 9px; font-weight: 700; }
  .sea, .ocean { font-size: 11px; font-style: italic; fill: #5383c5; stroke: none; }
  .logo { font: 500 20px Lato, sans-serif; stroke-width: 2px; }
  .kinds { position: absolute; left: 10px; top: 10px; height: 30px; background: #fff; border-radius: 2px; box-shadow: 0 1px 4px #0004; display: flex; line-height: 31px; font-size: 11px; color: #565656; }
  .kinds b { width: 38px; text-align: center; color: #000; font-weight: 500; border-right: 1px solid #e2e2e2; }
  .kinds span { width: 55px; text-align: center; }
  .full { position: absolute; right: 14px; top: 10px; width: 25px; height: 25px; background: #fff; display: grid; place-items: center; border-radius: 1px; }
  .controls { position: absolute; right: 10px; bottom: 24px; display: grid; gap: 10px; }
  .peg, .zoom { width: 28px; background: #fff; border-radius: 2px; box-shadow: 0 1px 4px #0004; }
  .peg { height: 28px; display: grid; place-items: center; }
  .zoom { height: 55px; }
  .legal { position: absolute; right: 0; bottom: 0; height: 14px; display: flex; gap: 1px; font-size: 9.500px; line-height: 17px; color: #444; }
  .legal span { background: #dce8f8; width: 70px; text-align: center; white-space: nowrap; letter-spacing: .16px; height: 14px; }
  .legal span:first-child { width: 149px; }
  footer { line-height: 20px; }
  .taskbar { height: 40px; flex: none; display: flex; color: #fff; font-family: 'Open Sans', sans-serif; background: radial-gradient(ellipse 90px 40px at 1450px 20px, #2e230c, transparent), radial-gradient(ellipse 25px 60px at 1550px 20px, #2b210a, transparent), radial-gradient(ellipse 100px 40px at 1290px 20px, #25190a, transparent), linear-gradient(90deg, #15110b, #1b150c 24%, #16110b 35%, #211a10 45%, #211a0e 60%, #120e08 68%, #080a08 75%, #020202 84%, #020202); }
  .start { width: 48px; display: grid; place-items: center; padding-right: 1px; }
  .cortana { width: 344px; background: #333; display: flex; align-items: center; padding: 0 15px 0 9px; font-size: 14.500px; color: #b2b2b2; letter-spacing: -.28px; }
  .cortana span { flex: 1; margin-left: 9px; }
  .view { width: 51px; display: grid; place-items: center; padding-right: 3px; }
  .apps { display: flex; gap: 1px; }
  .app { width: 48px; height: 40px; display: grid; place-items: center; position: relative; }
  .app::after { content: ''; position: absolute; left: 4px; right: 4px; bottom: 0; height: 2px; background: #76b9ed; }
  .app.many::after { background: linear-gradient(90deg, #76b9ed 80%, #4b7ba0 80%); }
  .app.on { background: #47433c; }
  .app.on::after { left: 0; right: 0; }
  .tray { margin-left: auto; margin-right: 3px; padding-right: 17px; border-right: 1px solid #555; display: flex; align-items: center; gap: 9px; }
  .clock { display: flex; flex-direction: column; width: 60px; margin-left: -6px; text-align: center; font-size: 12px; line-height: 18px; letter-spacing: -.4px; }
  .note text { font: 12px 'Open Sans', sans-serif; fill: #fff; stroke: none; }
</style>
